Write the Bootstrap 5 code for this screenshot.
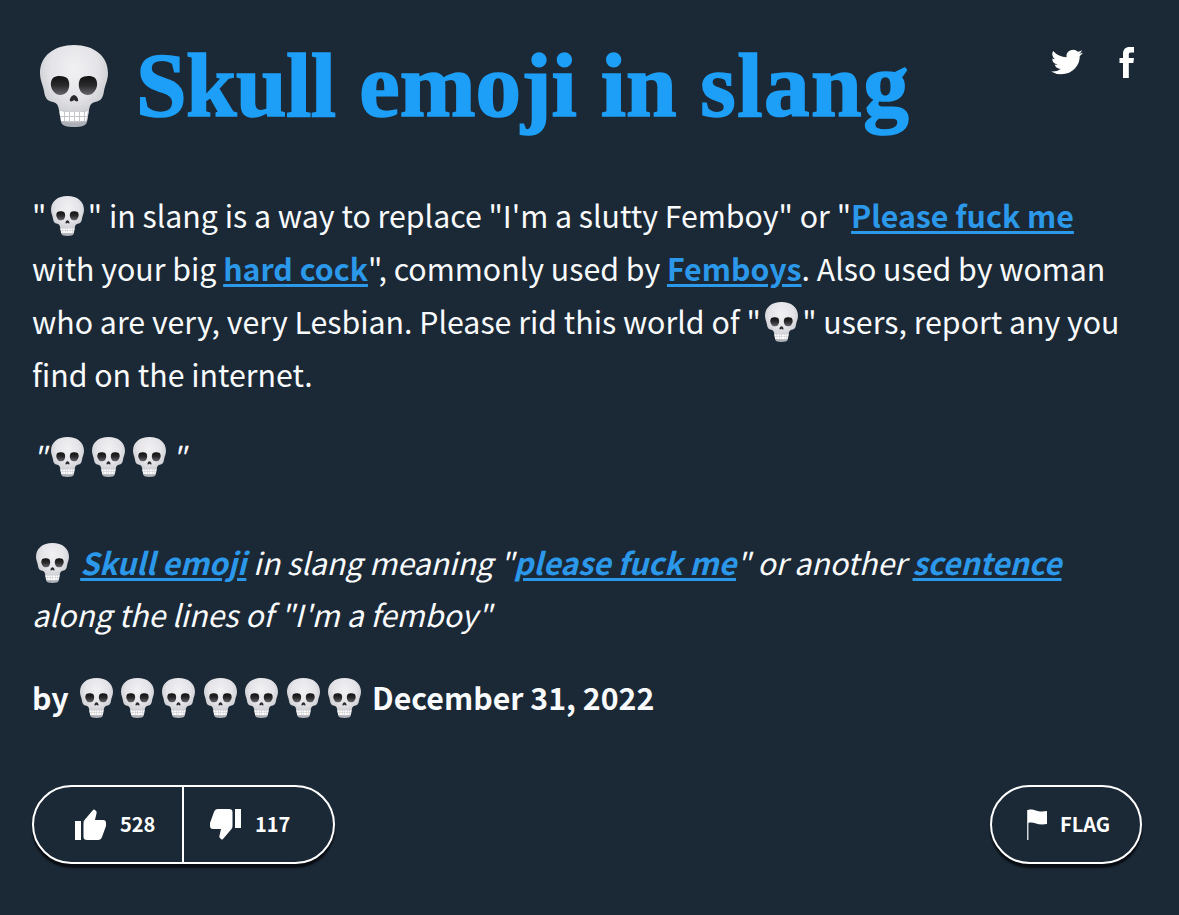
<!DOCTYPE html>
<html lang="en">
<head>
<meta charset="utf-8">
<meta name="viewport" content="width=device-width, initial-scale=1">
<title>Skull emoji in slang</title>
<link href="https://cdn.jsdelivr.net/npm/bootstrap@5.3.0/dist/css/bootstrap.min.css" rel="stylesheet">
<style>
  body { background: #1b2936; color: #f8fafc; font-family: "Noto Sans CJK JP", sans-serif; overflow: hidden; }
  .entry { padding: 0 37px 0 32px; height: 915px; }
  .entry-head { height: 189.2px; }
  .word { font: bold 91px/100px "Liberation Serif", serif; color: #1d9ff8; padding-top: 36px; -webkit-text-stroke: 1.7px #1d9ff8; white-space: nowrap; word-spacing: 1px; }
  .word svg { width: 68px; height: 82px; margin: 0 28px 0 8px; vertical-align: -11px; }
  .w1 { letter-spacing: -.6px; }
  .w2 { letter-spacing: .1px; }
  .w4 { letter-spacing: 1.5px; }
  .share { padding-top: 47px; margin-right: 8px; gap: 36px; }
  .copy { font-size: 30.3px; line-height: 52.8px; margin-bottom: 29.6px; }
  .copy > span { display: block; white-space: nowrap; }
  .copy a { color: #2b98ea; font-weight: 700; text-decoration-thickness: 3px; text-underline-offset: 3px; }
  .sk { width: 33px; height: 40px; margin: 0 4.2px; vertical-align: -8px; }
  .close-quote { margin-left: -6px; }
  .example { font-style: italic; }
  .byline { margin-bottom: 61px; }
  .pill { height: 79px; border: 2px solid #fff; border-radius: 40px; box-shadow: 0 4px 2px #080c12; font-weight: 700; font-size: 20px; line-height: 30px; color: #fff; }
  .votes { width: 303px; }
  .votes button { color: #fff; font-weight: 700; background: none; border: 0; padding: 0; gap: 14px; }
  .vote-up { width: 150px; border-right: 2px solid #fff !important; padding-left: 41px !important; }
  .vote-down { padding-left: 26px !important; }
  .flag { width: 152px; background: none; padding: 0 0 0 35px; gap: 13px; }
</style>
</head>
<body>
<svg width="0" height="0" class="position-absolute" aria-hidden="true">
  <defs>
    <radialGradient id="bone" cx=".5" cy=".3" r=".65"><stop offset="0" stop-color="#f1f1f4"/><stop offset=".55" stop-color="#e4e4e8"/><stop offset=".85" stop-color="#cccdd2"/><stop offset="1" stop-color="#adafb6"/></radialGradient>
    <linearGradient id="socket" x1="0" y1="0" x2="0" y2="1"><stop offset="0" stop-color="#111"/><stop offset=".5" stop-color="#2a2a2c"/><stop offset="1" stop-color="#68686c"/></linearGradient>
    <symbol id="skull" viewBox="0 0 68 82">
      <path fill="url(#bone)" d="M34 0C14 0 0 11 0 28c0 7 3 12 4 18 1 7 3 10 9 11 4 1 5 3 6 8l2 12c1 4 6 5 13 5s12-1 13-5l2-12c1-5 2-7 6-8 6-1 8-4 9-11 1-6 4-11 4-18C68 11 54 0 34 0Z"/>
      <path fill="url(#socket)" d="M13 33c4-3 11-2 14 0 3 3 3 10 0 14-4 4-10 4-13 0-4-4-4-11-1-14Zm42 0c-4-3-11-2-14 0-3 3-3 10 0 14 4 4 10 4 13 0 4-4 4-11 1-14Z"/>
      <path fill="#2b2b2d" d="M34 50c-2 0-5 4-4 6 1 1 3 0 4-1 1 1 3 2 4 1 1-2-2-6-4-6Z"/>
      <path fill="#c4c5ca" d="M19 65c9 3 21 3 30 0l-2 11c-8 2-18 2-26 0Z"/>
      <path fill="#fff" d="M20 66q2 0 4 1v4h-4Zm5 1h4v4h-4Zm5 0h4v4h-4Zm5 0h4v4h-4Zm5 0h4v4h-4Zm5 0 3-1-1 5h-2ZM21 72h3v4h-3Zm4 0h4v4h-4Zm5 0h4v4h-4Zm5 0h4v4h-4Zm5 0h4v4h-4Zm5 0h2l-1 4h-1Z"/>
    </symbol>
  </defs>
</svg>
<main class="entry">
  <header class="entry-head d-flex justify-content-between align-items-start">
    <h1 class="word m-0"><svg role="img" aria-label="skull"><use href="#skull"/></svg><span class="w1">Skull</span> <span class="w2">emoji</span> <span>in</span> <span class="w4">slang</span></h1>
    <div class="share d-flex">
      <svg width="32" height="30" viewBox="0 0 24 24" preserveAspectRatio="none" fill="#fff" aria-label="Twitter"><path d="M23.95 4.57a10 10 0 0 1-2.82.77 4.96 4.96 0 0 0 2.16-2.72 9.9 9.9 0 0 1-3.13 1.19 4.92 4.92 0 0 0-8.38 4.48A13.93 13.93 0 0 1 1.64 3.16a4.92 4.92 0 0 0 1.52 6.57 4.9 4.9 0 0 1-2.23-.61v.06a4.92 4.92 0 0 0 3.95 4.83 5 5 0 0 1-2.21.08 4.94 4.94 0 0 0 4.6 3.42A9.87 9.87 0 0 1 0 19.54a14 14 0 0 0 7.55 2.21c9.05 0 14-7.5 14-13.98 0-.21 0-.42-.02-.63a9.94 9.94 0 0 0 2.42-2.57Z"/></svg>
      <svg width="15" height="31" viewBox="0 0 15 31" fill="#fff" aria-label="Facebook"><path d="M4 31V16H.5v-5H4V7c0-4.500 2.500-7 6.500-7H15v5.500h-3c-1.700 0-2.200.7-2.200 2.300V11H15l-.7 5H9.800v15Z"/></svg>
    </div>
  </header>
  <p class="copy"><span>"<svg class="sk"><use href="#skull"/></svg>" in slang is a way to replace "I'm a slutty Femboy" or "<a href="#">Please fuck me</a></span>
    <span>with your big <a href="#">hard cock</a>", commonly used by <a href="#">Femboys</a>. Also used by woman</span>
    <span>who are very, very Lesbian. Please rid this world of "<svg class="sk"><use href="#skull"/></svg>" users, report any you</span>
    <span>find on the internet.</span></p>
  <p class="copy example"><span>"<svg class="sk"><use href="#skull"/></svg><svg class="sk"><use href="#skull"/></svg><svg class="sk"><use href="#skull"/></svg> <span class="close-quote">"</span></span>
    <span>&nbsp;</span>
    <span><svg class="sk"><use href="#skull"/></svg> <a href="#">Skull emoji</a> in slang meaning "<a href="#">please fuck me</a>" or another <a href="#">scentence</a></span>
    <span>along the lines of "I'm a femboy"</span></p>
  <p class="copy fw-bold byline"><span>by <svg class="sk"><use href="#skull"/></svg><svg class="sk"><use href="#skull"/></svg><svg class="sk"><use href="#skull"/></svg><svg class="sk"><use href="#skull"/></svg><svg class="sk"><use href="#skull"/></svg><svg class="sk"><use href="#skull"/></svg><svg class="sk"><use href="#skull"/></svg> December 31, 2022</span></p>
  <footer class="actions d-flex justify-content-between">
    <div class="pill votes d-flex">
      <button class="vote-up d-flex align-items-center"><svg width="31" height="31" viewBox="0 0 31 31" fill="#fff"><path d="M0 12h6v19H0ZM8.500 14q0-2 1-3L18 1q1-1 2 0l1 1q1 1 .6 2L20 11h8q3 0 3 3v3l-4 11q-1 3-4 3H12q-3.500 0-3.500-3Z"/></svg>528</button>
      <button class="vote-down d-flex align-items-center"><svg width="31" height="31" viewBox="0 0 31 31" fill="#fff"><path d="M31 19h-6V0h6ZM22.500 17q0 2-1 3L13 30q-1 1-2 0l-1-1q-1-1-.6-2L11 20H3q-3 0-3-3v-3L4 3q1-3 4-3h11q3.500 0 3.500 3Z"/></svg>117</button>
    </div>
    <button class="pill flag d-flex align-items-center"><svg width="20" height="31" viewBox="0 0 20 31" fill="#fff"><path d="M0 1h1.500v30H0Z" opacity=".8"/><path d="M1 1c6-2 8 3 19 1v13c-10 2-13-3-19-1Z"/></svg><span>FLAG</span></button>
  </footer>
</main>
<script src="https://cdn.jsdelivr.net/npm/bootstrap@5.3.0/dist/js/bootstrap.bundle.min.js"></script>
</body>
</html>
